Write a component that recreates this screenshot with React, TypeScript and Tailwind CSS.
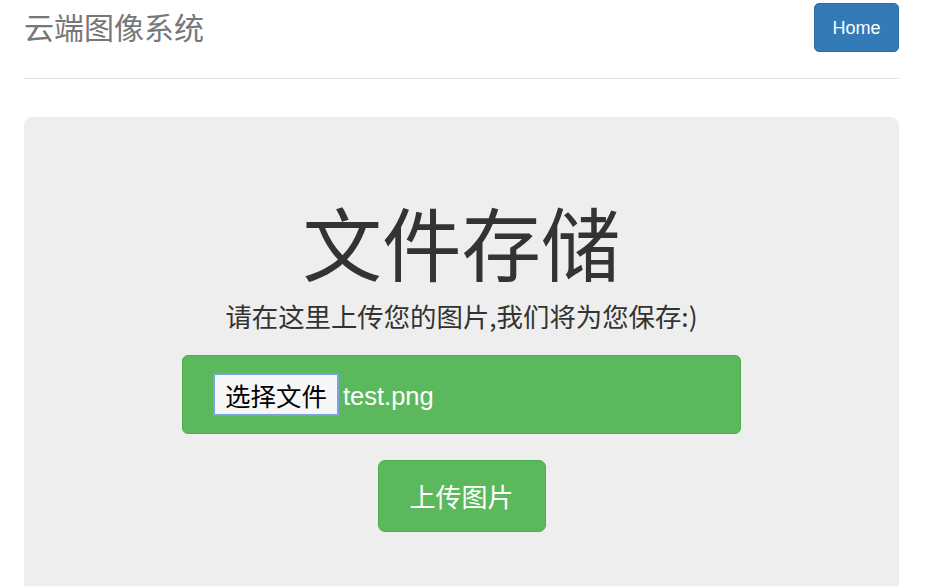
import React from "react";

const cjk = '"Noto Sans CJK SC", "Liberation Sans", sans-serif';
const latin = '"Liberation Sans", "Noto Sans CJK SC", sans-serif';

export default function App() {
  return (
    <div className="min-h-[586px] bg-white pl-[24px] pr-[36px]" style={{ fontFamily: cjk }}>
      <header className="flex h-[79px] items-start justify-between border-b border-[#e5e5e5]">
        <h3 className="mt-[11px] text-[30px] leading-[30px] font-normal text-[#777]">云端图像系统</h3>
        <button
          className="mt-[3px] flex h-[49px] w-[85px] items-center justify-center rounded-[5px] border border-[#2e6da4] bg-[#337ab7] pt-[1px] text-[18px] text-white"
          style={{ fontFamily: latin }}
        >
          Home
        </button>
      </header>

      <section className="mt-[38px] flex min-h-[480px] flex-col items-center rounded-[8px] bg-[#eeeeee] pt-[84px]">
        <h1 className="text-[79.5px] leading-[79px] font-normal text-[#333]">文件存储</h1>
        <p className="mt-[23px] text-[26.4px] leading-[26px] text-[#333]">
          请在这里上传您的图片,我们将为您保存:)
        </p>
        <div className="mt-[26px] flex h-[79px] w-[559px] items-center rounded-[6px] border border-[#4cae4c] bg-[#5cb85c] pl-[30px]">
          <span className="flex h-[43px] w-[126px] items-center justify-center border-2 border-[#7aa3dd] bg-[#f7f7f7] text-[25.5px] leading-[26px] text-black">
            选择文件
          </span>
          <span className="ml-[4px] pt-[3px] text-[25.5px] leading-[26px] text-white" style={{ fontFamily: latin }}>
            test.png
          </span>
        </div>
        <button className="mt-[26px] flex h-[72px] w-[168px] items-center justify-center rounded-[7px] border border-[#4cae4c] bg-[#5cb85c] text-[26px] leading-[26px] text-white">
          上传图片
        </button>
      </section>
    </div>
  );
}
